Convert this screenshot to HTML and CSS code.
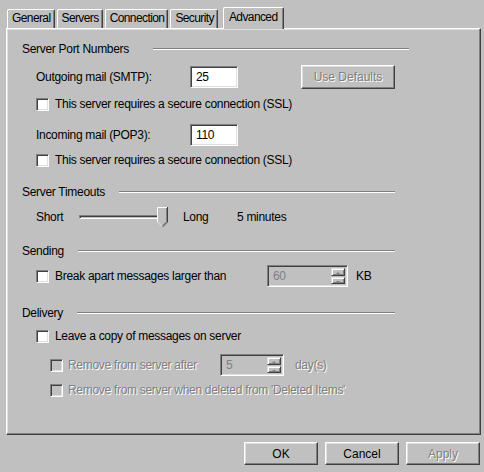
FILE: index.html
```html
<!DOCTYPE html>
<html lang="en">
<head>
  <meta charset="UTF-8">
  <title>Account Properties - Advanced</title>
  <link rel="stylesheet" href="styles.css">
</head>
<body>
  <div class="tabs">
    <div class="tab">General</div>
    <div class="tab">Servers</div>
    <div class="tab">Connection</div>
    <div class="tab">Security</div>
    <div class="tab active">Advanced</div>
  </div>

  <div class="panel">
    <div class="group-title mt-12"><span>Server Port Numbers</span><i class="sep sep-wide"></i></div>
    <div class="row field mt-8">
      <span class="lbl-port">Outgoing mail (SMTP):</span>
      <span class="textbox">25</span>
      <button class="btn btn-defaults" disabled>Use Defaults</button>
    </div>
    <div class="row check mt-7"><span class="cb"></span><span>This server requires a secure connection (SSL)</span></div>
    <div class="row field mt-11">
      <span class="lbl-port">Incoming mail (POP3):</span>
      <span class="textbox">110</span>
    </div>
    <div class="row check mt-5"><span class="cb"></span><span>This server requires a secure connection (SSL)</span></div>

    <div class="group-title mt-16"><span>Server Timeouts</span><i class="sep"></i></div>
    <div class="row field mt-5">
      <span class="lbl-short">Short</span>
      <div class="slider">
        <div class="track"></div>
        <svg class="thumb" width="11" height="20" viewBox="0 0 11 20">
          <polygon points="0,0 11,0 11,15 5.5,20 0,15" fill="#c0c0c0"/>
          <path d="M0.5 15 V0.5 H10" stroke="#fff" fill="none"/>
          <path d="M10.5 0 V15 L5.5 20" stroke="#404040" fill="none"/>
          <path d="M9.5 1 V14.5 L5.5 18.5" stroke="#808080" fill="none"/>
          <path d="M0.5 15 L5 19.5" stroke="#dfdfdf" fill="none"/>
        </svg>
      </div>
      <span class="lbl-long">Long</span>
      <span>5 minutes</span>
    </div>

    <div class="group-title mt-14"><span>Sending</span><i class="sep"></i></div>
    <div class="row field indent mt-5">
      <span class="cb"></span>
      <span class="lbl-break">Break apart messages larger than</span>
      <div class="spin spin-kb">
        <span class="spin-val">60</span>
        <span class="spin-btns"><i class="up"></i><i class="down"></i></span>
      </div>
      <span class="unit">KB</span>
    </div>

    <div class="group-title mt-17"><span>Delivery</span><i class="sep"></i></div>
    <div class="row check mt-7"><span class="cb"></span><span>Leave a copy of messages on server</span></div>
    <div class="row field sub disabled mt-9">
      <span class="cb off"></span>
      <span class="lbl-after">Remove from server after</span>
      <div class="spin spin-days">
        <span class="spin-val">5</span>
        <span class="spin-btns"><i class="up"></i><i class="down"></i></span>
      </div>
      <span class="unit">day(s)</span>
    </div>
    <div class="row check sub disabled mt-5"><span class="cb off"></span><span>Remove from server when deleted from 'Deleted Items'</span></div>
  </div>

  <div class="actions">
    <button class="btn">OK</button>
    <button class="btn">Cancel</button>
    <button class="btn" disabled>Apply</button>
  </div>
</body>
</html>
```

FILE: styles.css
```css
* { box-sizing: border-box; }

body {
  margin: 0;
  width: 484px;
  height: 472px;
  overflow: hidden;
  background: #c0c0c0;
  color: #000;
  font-family: "Liberation Sans", Arial, sans-serif;
  font-size: 12px;
  letter-spacing: -0.3px;
}

/* tab strip */
.tabs {
  display: flex;
  align-items: flex-end;
  gap: 2px;
  height: 28px;
  padding-left: 7px;
}
.tab {
  height: 19px;
  padding: 0 3px 0 4px;
  line-height: 17px;
  letter-spacing: -0.6px;
  border: 1px solid;
  border-color: #fff #404040 transparent #fff;
  border-bottom: none;
  border-radius: 2px 2px 0 0;
  box-shadow: inset -1px 0 #808080;
}
.tab.active {
  position: relative;
  z-index: 1;
  height: 22px;
  margin: 0 0 -1px 3px;
  padding: 0 5px;
  line-height: 19px;
  background: #c0c0c0;
}

/* page body */
.panel {
  margin-left: 6px;
  width: 475px;
  height: 407px;
  border: 1px solid;
  border-color: #fff #404040 #404040 #fff;
  box-shadow: inset -1px -1px #808080, inset 1px 1px #dfdfdf;
  padding-left: 15px;
}

.group-title {
  display: flex;
  align-items: center;
  height: 16px;
}
.sep {
  flex: 1;
  margin: 0 85px 0 14px;
  height: 2px;
  border-top: 1px solid #808080;
  border-bottom: 1px solid #fff;
}
.sep-wide { margin: 0 71px 0 24px; }

.row {
  display: flex;
  align-items: center;
  padding-left: 14px;
}
.row.field { height: 24px; }
.row.check { height: 16px; gap: 6px; }
.row.indent .cb { margin-right: 6px; }
.row.sub { padding-left: 28px; }
.row.sub.check { gap: 5px; }
.row.sub.field .cb { margin-right: 5px; }
.disabled { color: #808080; text-shadow: 1px 1px #fff; }

.mt-5 { margin-top: 5px; }
.mt-7 { margin-top: 7px; }
.mt-8 { margin-top: 8px; }
.mt-9 { margin-top: 9px; }
.mt-11 { margin-top: 11px; }
.mt-12 { margin-top: 12px; }
.mt-14 { margin-top: 14px; }
.mt-16 { margin-top: 16px; }
.mt-17 { margin-top: 17px; }

.lbl-port { width: 154px; }
.lbl-short { width: 43px; }
.lbl-long { width: 54px; margin-left: 16px; }
.lbl-break { width: 212px; }
.lbl-after { width: 152px; }
.unit { margin-left: 8px; }
.spin-days + .unit { margin-left: 11px; }

/* sunken controls */
.textbox, .spin, .cb {
  border: 1px solid;
  border-color: #808080 #fff #fff #808080;
  box-shadow: inset 1px 1px #404040, inset -1px -1px #dfdfdf;
}
.textbox {
  width: 48px;
  height: 22px;
  padding: 0 5px;
  line-height: 20px;
  background: #fff;
}
.cb {
  width: 13px;
  height: 13px;
  flex: none;
  background: #fff;
}
.cb.off { background: #c0c0c0; }

.spin {
  display: flex;
  height: 22px;
  background: #c0c0c0;
  padding: 2px;
}
.spin-kb { width: 81px; }
.spin-days { width: 64px; }
.spin-val {
  flex: 1;
  padding-left: 3px;
  line-height: 17px;
  color: #808080;
  text-shadow: none;
}
.spin-btns {
  display: flex;
  flex-direction: column;
  gap: 1px;
  width: 14px;
}
.spin-btns i {
  flex: 1;
  position: relative;
  border: 1px solid;
  border-color: #dfdfdf #404040 #404040 #dfdfdf;
  box-shadow: inset 1px 1px #fff, inset -1px -1px #808080;
}
.spin-btns i::after {
  content: "";
  position: absolute;
  left: 4px;
  top: 3px;
  border-left: 2px solid transparent;
  border-right: 2px solid transparent;
}
.spin-btns .up::after { border-bottom: 2px solid #808080; }
.spin-btns .down::after { border-top: 2px solid #808080; }

/* slider */
.slider {
  position: relative;
  width: 88px;
  height: 20px;
  display: flex;
  align-items: center;
}
.track {
  width: 84px;
  height: 4px;
  border: 1px solid;
  border-color: #808080 #fff #fff #808080;
  box-shadow: inset 1px 1px #404040;
}
.thumb {
  position: absolute;
  left: 78px;
  top: 0;
}

/* buttons */
.btn {
  width: 74px;
  height: 23px;
  padding: 0;
  background: #c0c0c0;
  font: inherit;
  color: #000;
  border: 1px solid;
  border-color: #fff #404040 #404040 #fff;
  box-shadow: inset -1px -1px #808080, inset 1px 1px #dfdfdf;
}
.btn:disabled { color: #808080; text-shadow: 1px 1px #fff; }
.btn-defaults { width: 94px; height: 24px; margin-left: 63px; }

.actions {
  display: flex;
  justify-content: flex-end;
  gap: 7px;
  padding: 7px 4px 0 0;
}
```
